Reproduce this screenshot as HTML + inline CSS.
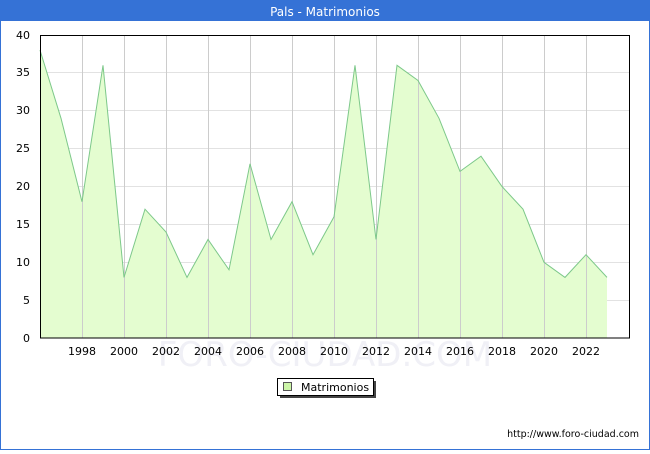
<!DOCTYPE html>
<html><head><meta charset="utf-8"><style>
body{margin:0;width:650px;height:450px;overflow:hidden;background:#fff;font-family:"DejaVu Sans","Liberation Sans",sans-serif;}
</style></head><body>
<svg width="650" height="450" xmlns="http://www.w3.org/2000/svg" font-family="DejaVu Sans, Liberation Sans, sans-serif">
<rect x="0.5" y="0.5" width="649" height="449" fill="#fff" stroke="#3572d6"/>
<rect x="0" y="0" width="650" height="21" fill="#3572d6"/>
<text x="325" y="16" font-size="12" fill="#fff" text-anchor="middle">Pals - Matrimonios</text>
<text x="325" y="366" font-size="34" fill="#f0f0f6" text-anchor="middle">FORO-CIUDAD.COM</text>
<g stroke="#e2e2e2" stroke-width="1">
<line x1="40" y1="300.5" x2="630" y2="300.5"/><line x1="40" y1="262.5" x2="630" y2="262.5"/><line x1="40" y1="224.5" x2="630" y2="224.5"/><line x1="40" y1="186.5" x2="630" y2="186.5"/><line x1="40" y1="148.5" x2="630" y2="148.5"/><line x1="40" y1="110.5" x2="630" y2="110.5"/><line x1="40" y1="72.5" x2="630" y2="72.5"/>
</g>
<polygon fill="#e4fdd0" stroke="none" points="40,338 40,50.1 61,118.3 82,201.7 103,65.3 124,277.4 145,209.2 166,232 187,277.4 208,239.5 229,269.8 250,163.8 271,239.5 292,201.7 313,254.7 334,216.8 355,65.3 376,239.5 397,65.3 418,80.5 439,118.3 460,171.4 481,156.2 502,186.5 523,209.2 544,262.3 565,277.4 586,254.7 607,277.4 607,338"/>
<g stroke="#cccccc" stroke-width="1">
<line x1="82.5" y1="35" x2="82.5" y2="338"/><line x1="124.5" y1="35" x2="124.5" y2="338"/><line x1="166.5" y1="35" x2="166.5" y2="338"/><line x1="208.5" y1="35" x2="208.5" y2="338"/><line x1="250.5" y1="35" x2="250.5" y2="338"/><line x1="292.5" y1="35" x2="292.5" y2="338"/><line x1="334.5" y1="35" x2="334.5" y2="338"/><line x1="376.5" y1="35" x2="376.5" y2="338"/><line x1="418.5" y1="35" x2="418.5" y2="338"/><line x1="460.5" y1="35" x2="460.5" y2="338"/><line x1="502.5" y1="35" x2="502.5" y2="338"/><line x1="544.5" y1="35" x2="544.5" y2="338"/><line x1="586.5" y1="35" x2="586.5" y2="338"/>
</g>
<polyline fill="none" stroke="#7dc88a" stroke-width="1" points="40,50.1 61,118.3 82,201.7 103,65.3 124,277.4 145,209.2 166,232 187,277.4 208,239.5 229,269.8 250,163.8 271,239.5 292,201.7 313,254.7 334,216.8 355,65.3 376,239.5 397,65.3 418,80.5 439,118.3 460,171.4 481,156.2 502,186.5 523,209.2 544,262.3 565,277.4 586,254.7 607,277.4"/>
<rect x="40.5" y="35.5" width="589" height="302.5" fill="none" stroke="#000"/>
<g font-size="11" fill="#000" text-anchor="end">
<text x="30" y="342">0</text><text x="30" y="304">5</text><text x="30" y="266">10</text><text x="30" y="228">15</text><text x="30" y="190">20</text><text x="30" y="152">25</text><text x="30" y="114">30</text><text x="30" y="76">35</text><text x="30" y="39">40</text>
</g>
<g font-size="11" fill="#000" text-anchor="middle">
<text x="82" y="355">1998</text><text x="124" y="355">2000</text><text x="166" y="355">2002</text><text x="208" y="355">2004</text><text x="250" y="355">2006</text><text x="292" y="355">2008</text><text x="334" y="355">2010</text><text x="376" y="355">2012</text><text x="418" y="355">2014</text><text x="460" y="355">2016</text><text x="502" y="355">2018</text><text x="544" y="355">2020</text><text x="586" y="355">2022</text>
</g>
<rect x="280" y="381" width="96" height="17" fill="#444"/>
<rect x="277.5" y="378.5" width="96" height="17" fill="#fff" stroke="#000"/>
<rect x="283.5" y="382.5" width="8" height="8" fill="#ccf5a8" stroke="#555"/>
<text x="301" y="391" font-size="11" fill="#000">Matrimonios</text>
<text x="639" y="437" font-size="9.5" fill="#000" text-anchor="end">http://www.foro-ciudad.com</text>
</svg>
</body></html>
